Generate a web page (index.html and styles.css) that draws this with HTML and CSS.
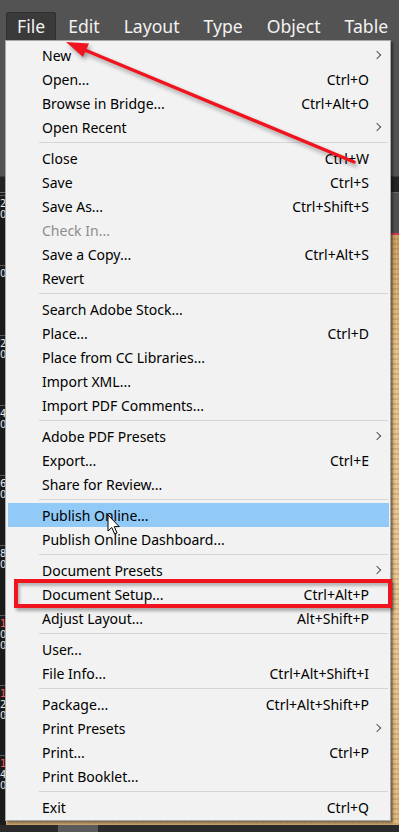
FILE: index.html
```html
<!DOCTYPE html>
<html lang="en">
<head>
    <meta charset="UTF-8">
    <meta name="viewport" content="width=device-width, initial-scale=1.0">
    <title>File menu</title>
    <link rel="stylesheet" href="styles.css">
</head>
<body>
    <div class="app">
        <nav class="menubar">
            <span class="menubar-item active">File</span>
            <span class="menubar-item">Edit</span>
            <span class="menubar-item">Layout</span>
            <span class="menubar-item">Type</span>
            <span class="menubar-item">Object</span>
            <span class="menubar-item">Table</span>
        </nav>

        <div class="workspace">
            <div class="control-panel"></div>
            <div class="h-ruler"></div>
            <div class="doc-area">
                <div class="v-ruler">
                    <div class="ruler-label"><span>2</span><span>0</span></div>
                    <div class="ruler-label"><span>0</span></div>
                    <div class="ruler-label"><span>2</span><span>0</span></div>
                    <div class="ruler-label"><span>4</span><span>0</span></div>
                    <div class="ruler-label"><span>6</span><span>0</span></div>
                    <div class="ruler-label"><span>8</span><span>0</span></div>
                    <div class="ruler-label"><span class="red">1</span><span>0</span><span>0</span></div>
                    <div class="ruler-label"><span class="red">1</span><span>2</span><span>0</span></div>
                    <div class="ruler-label"><span class="red">1</span><span>4</span><span>0</span></div>
                </div>
                <div class="pasteboard">
                    <div class="page"></div>
                </div>
            </div>
            <div class="status-bar"><div class="status-box"></div></div>
        </div>
    </div>

    <!-- File dropdown -->
    <div class="file-menu">
        <div class="item"><span>New</span><span></span><span class="sub"></span></div>
        <div class="item"><span>Open...</span><span>Ctrl+O</span><span></span></div>
        <div class="item"><span>Browse in Bridge...</span><span>Ctrl+Alt+O</span><span></span></div>
        <div class="item"><span>Open Recent</span><span></span><span class="sub"></span></div>
        <div class="sep"></div>
        <div class="item"><span>Close</span><span>Ctrl+W</span><span></span></div>
        <div class="item"><span>Save</span><span>Ctrl+S</span><span></span></div>
        <div class="item"><span>Save As...</span><span>Ctrl+Shift+S</span><span></span></div>
        <div class="item disabled"><span>Check In...</span><span></span><span></span></div>
        <div class="item"><span>Save a Copy...</span><span>Ctrl+Alt+S</span><span></span></div>
        <div class="item"><span>Revert</span><span></span><span></span></div>
        <div class="sep"></div>
        <div class="item"><span>Search Adobe Stock...</span><span></span><span></span></div>
        <div class="item"><span>Place...</span><span>Ctrl+D</span><span></span></div>
        <div class="item"><span>Place from CC Libraries...</span><span></span><span></span></div>
        <div class="item"><span>Import XML...</span><span></span><span></span></div>
        <div class="item"><span>Import PDF Comments...</span><span></span><span></span></div>
        <div class="sep"></div>
        <div class="item"><span>Adobe PDF Presets</span><span></span><span class="sub"></span></div>
        <div class="item"><span>Export...</span><span>Ctrl+E</span><span></span></div>
        <div class="item"><span>Share for Review...</span><span></span><span></span></div>
        <div class="sep"></div>
        <div class="item hover"><span>Publish Online...</span><span></span><span></span></div>
        <div class="item"><span>Publish Online Dashboard...</span><span></span><span></span></div>
        <div class="sep"></div>
        <div class="item"><span>Document Presets</span><span></span><span class="sub"></span></div>
        <div class="item"><span>Document Setup...</span><span>Ctrl+Alt+P</span><span></span></div>
        <div class="item"><span>Adjust Layout...</span><span>Alt+Shift+P</span><span></span></div>
        <div class="sep"></div>
        <div class="item"><span>User...</span><span></span><span></span></div>
        <div class="item"><span>File Info...</span><span>Ctrl+Alt+Shift+I</span><span></span></div>
        <div class="sep"></div>
        <div class="item"><span>Package...</span><span>Ctrl+Alt+Shift+P</span><span></span></div>
        <div class="item"><span>Print Presets</span><span></span><span class="sub"></span></div>
        <div class="item"><span>Print...</span><span>Ctrl+P</span><span></span></div>
        <div class="item"><span>Print Booklet...</span><span></span><span></span></div>
        <div class="sep"></div>
        <div class="item"><span>Exit</span><span>Ctrl+Q</span><span></span></div>
    </div>

    <!-- annotations drawn over the screenshot -->
    <div class="callout-box"></div>
    <svg class="callout-arrow" width="399" height="200" viewBox="0 0 399 200">
        <line x1="80" y1="48" x2="354" y2="162" stroke="#f0141e" stroke-width="3.5" stroke-linecap="round"/>
        <polygon points="66,42 89,43.5 83,57" fill="#f0141e"/>
    </svg>
    <svg class="cursor" width="14" height="22" viewBox="0 0 14 22">
        <path d="M1 1 L1 17 L4.8 13.5 L7.6 20 L10 19 L7.3 12.6 L12.2 12.6 Z" fill="#fff" stroke="#000" stroke-width="1" stroke-linejoin="round"/>
    </svg>
</body>
</html>
```

FILE: styles.css
```css
* {
    box-sizing: border-box;
}

body {
    margin: 0;
    width: 399px;
    height: 832px;
    overflow: hidden;
    font-family: 'Noto Sans', 'Open Sans', sans-serif;
    background-color: #535353;
}

.app {
    display: flex;
    flex-direction: column;
    height: 832px;
}

.menubar {
    display: flex;
    height: 40px;
    padding: 12px 0 0 6px;
    background-color: #535353;
    flex-shrink: 0;
}

.menubar-item {
    padding: 0 12px;
    height: 28px;
    line-height: 29px;
    font-size: 17.6px;
    color: #f2f2f2;
}

.menubar-item.active {
    padding: 0 10px;
    background-color: #3a3a3a;
    border: 1px solid #2e2e2e;
    border-bottom: none;
    border-radius: 3px 3px 0 0;
    line-height: 27px;
}

.workspace {
    flex: 1;
    display: flex;
    flex-direction: column;
}

.control-panel {
    height: 137px;
    background-color: #535353;
    border-bottom: 1px solid #3c3c3c;
}

.h-ruler {
    height: 16px;
    background-color: #232323;
    border-bottom: 1px solid #6a6a6a;
}

.doc-area {
    flex: 1;
    display: flex;
}

.v-ruler {
    width: 6px;
    overflow: hidden;
    background-color: #1b1b1b;
    padding-top: 2px;
    display: flex;
    flex-direction: column;
}

.ruler-label {
    height: 70px;
    flex-shrink: 0;
    display: flex;
    flex-direction: column;
    font-family: 'DejaVu Sans', sans-serif;
    font-size: 10px;
    line-height: 11px;
    color: #e8e8e8;
    border-top: 1px solid #5a5a5a;
    padding-top: 2px;
}

.ruler-label .red {
    color: #ff5a5a;
}

.pasteboard {
    flex: 1;
    display: flex;
    flex-direction: column;
    background-color: #505050;
    padding-top: 40px;
}

.page {
    flex: 1;
    border-top: 2px solid #d8324a;
    background:
        repeating-linear-gradient(0deg, rgba(120, 70, 20, 0.18) 0 2px, transparent 2px 5px),
        repeating-linear-gradient(90deg, rgba(255, 240, 200, 0.25) 0 1px, transparent 1px 3px),
        linear-gradient(180deg, #c89a5a 0%, #e4bd83 20%, #e8c591 60%, #deb47a 100%);
}

.status-bar {
    height: 14px;
    background-color: #2a2a2a;
    padding-left: 58px;
    display: flex;
}

.status-box {
    width: 40px;
    background-color: #5a5a5a;
}

/* dropdown */
.file-menu {
    position: absolute;
    top: 40px;
    left: 5px;
    width: 386px;
    padding: 2px 1px 1px 2px;
    background-color: #f2f2f2;
    border: 1px solid #a8a8a8;
    box-shadow: 2px 2px 2px rgba(0, 0, 0, 0.45);
    font-size: 14px;
    color: #000;
}

.item {
    display: grid;
    grid-template-columns: 1fr auto 20px;
    align-items: center;
    height: 24px;
    padding-left: 34px;
    white-space: nowrap;
}

.item.disabled {
    color: #8d8d8d;
}

.item.hover {
    background-color: #91c9f7;
}

.sub {
    justify-self: start;
    margin-left: 5px;
    width: 6px;
    height: 6px;
    border-right: 1.3px solid #555;
    border-top: 1.3px solid #555;
    transform: rotate(45deg);
}

.sep {
    height: 7px;
    margin: 0 1px 0 31px;
    padding-top: 3px;
}

.sep::after {
    content: '';
    display: block;
    height: 1px;
    background-color: #d5d5d5;
}

/* annotations */
.callout-box {
    position: absolute;
    top: 579px;
    left: 14px;
    width: 378px;
    height: 29px;
    border: 4px solid #f0141e;
    box-shadow: 2px 3px 3px rgba(0, 0, 0, 0.3), inset 2px 3px 3px rgba(0, 0, 0, 0.25);
}

.callout-arrow {
    position: absolute;
    top: 0;
    left: 0;
    filter: drop-shadow(2px 3px 2px rgba(0, 0, 0, 0.35));
}

.cursor {
    position: absolute;
    top: 514px;
    left: 107px;
}
```
